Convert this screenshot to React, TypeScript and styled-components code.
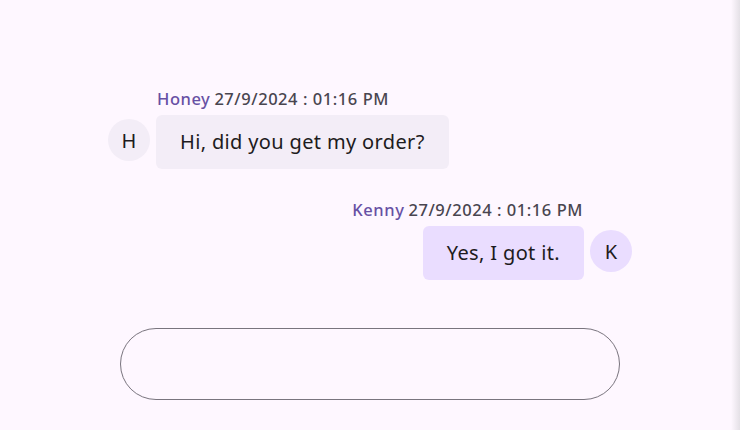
import styled, { createGlobalStyle } from 'styled-components'

const GlobalStyle = createGlobalStyle`
  html, body {
    margin: 0;
    padding: 0;
    height: 100%;
  }
  body {
    font-family: 'Noto Sans', 'Open Sans', sans-serif;
    background: linear-gradient(to right, #fef7ff calc(100% - 9px), #e4e0e6 100%);
    color: #1d1b20;
  }
  #root {
    height: 100%;
  }
`

const Page = styled.div`
  height: 430px;
  display: flex;
  flex-direction: column;
  align-items: center;
  padding-top: 88px;
  box-sizing: border-box;
`

const Thread = styled.div`
  width: 524px;
  display: flex;
  flex-direction: column;
  gap: 30px;
`

const Row = styled.div<{ $mine?: boolean }>`
  display: flex;
  flex-direction: ${({ $mine }) => ($mine ? 'row-reverse' : 'row')};
  align-items: flex-end;
  gap: 6px;
`

const Body = styled.div<{ $mine?: boolean }>`
  display: flex;
  flex-direction: column;
  align-items: ${({ $mine }) => ($mine ? 'flex-end' : 'flex-start')};
  gap: 5px;
`

const Header = styled.div`
  font-size: 16.5px;
  font-weight: 500;
  line-height: 22px;
  letter-spacing: 0.55px;
  color: #49454f;
  padding: 0 1px;
  white-space: nowrap;
`

const Name = styled.span`
  color: #6750a4;
  margin-right: 4px;
`

const Bubble = styled.div<{ $mine?: boolean }>`
  background: ${({ $mine }) => ($mine ? '#eaddff' : '#f3edf7')};
  border-radius: 6px;
  padding: 13px 24px 14px;
  font-size: 20px;
  line-height: 27px;
  letter-spacing: 0.35px;
  color: #1d1b20;
  white-space: nowrap;
`

const Avatar = styled.div<{ $mine?: boolean }>`
  width: 42px;
  height: 42px;
  border-radius: 50%;
  flex-shrink: 0;
  background: ${({ $mine }) => ($mine ? '#eaddff' : '#f3edf7')};
  display: flex;
  align-items: center;
  justify-content: center;
  font-size: 20px;
  color: #1d1b20;
  margin-bottom: 8px;
`

const Composer = styled.input`
  margin-top: 48px;
  width: 500px;
  height: 72px;
  box-sizing: border-box;
  border: 1px solid #79747e;
  border-radius: 36px;
  background: transparent;
  padding: 0 24px;
  font-family: inherit;
  font-size: 16px;
  outline: none;
`

type Message = {
  author: string
  time: string
  text: string
  mine?: boolean
}

const messages: Message[] = [
  { author: 'Honey', time: '27/9/2024 : 01:16 PM', text: 'Hi, did you get my order?' },
  { author: 'Kenny', time: '27/9/2024 : 01:16 PM', text: 'Yes, I got it.', mine: true },
]

export default function App() {
  return (
    <>
      <GlobalStyle />
      <Page>
        <Thread>
          {messages.map((m) => (
            <Row key={m.author} $mine={m.mine}>
              <Avatar $mine={m.mine}>{m.author[0]}</Avatar>
              <Body $mine={m.mine}>
                <Header>
                  <Name>{m.author}</Name>
                  {m.time}
                </Header>
                <Bubble $mine={m.mine}>{m.text}</Bubble>
              </Body>
            </Row>
          ))}
        </Thread>
        <Composer type="text" />
      </Page>
    </>
  )
}
